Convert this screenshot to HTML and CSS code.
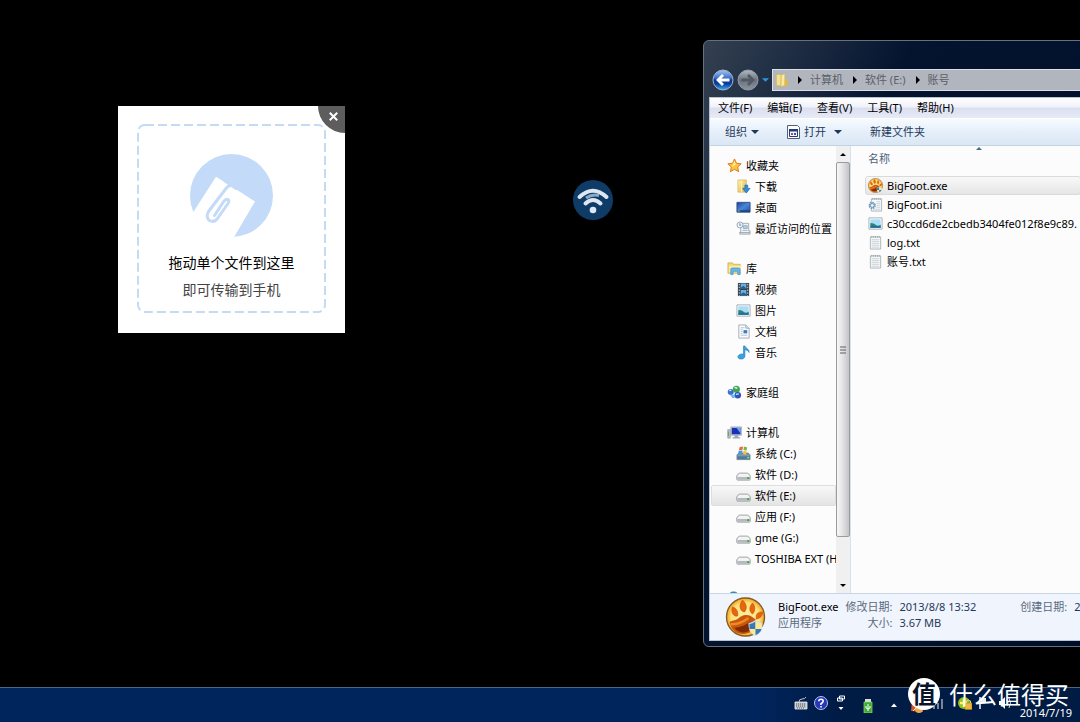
FILE: index.html
```html
<!DOCTYPE html>
<html lang="zh-CN">
<head>
<meta charset="utf-8">
<title>桌面</title>
<link rel="stylesheet" href="styles.css">
</head>
<body class="desktop">
<svg class="defs" aria-hidden="true">
  <defs>
    <linearGradient id="blue" x1="0" y1="0" x2="0" y2="1"><stop offset="0" stop-color="#a9c5ee"/><stop offset=".4" stop-color="#3a72cb"/><stop offset=".5" stop-color="#0b3594"/><stop offset=".7" stop-color="#0d3f9f"/><stop offset="1" stop-color="#35b4f4"/></linearGradient>
    <linearGradient id="grey" x1="0" y1="0" x2="0" y2="1"><stop offset="0" stop-color="#b4bac2"/><stop offset=".5" stop-color="#6b737e"/><stop offset="1" stop-color="#8b939d"/></linearGradient>
    <linearGradient id="gold" x1="0" y1="0" x2="1" y2="1"><stop offset="0" stop-color="#fff3b8"/><stop offset="1" stop-color="#e0b43c"/></linearGradient>
    <linearGradient id="screen" x1="0" y1="0" x2="1" y2="1"><stop offset="0" stop-color="#1b3f96"/><stop offset=".5" stop-color="#4c86d8"/><stop offset="1" stop-color="#1c4ea8"/></linearGradient>
    <radialGradient id="amber"><stop offset="0" stop-color="#fff4a8"/><stop offset=".75" stop-color="#ffe07a"/><stop offset="1" stop-color="#f0a020"/></radialGradient>
    <symbol id="star" viewBox="0 0 16 16"><path d="M8 1l2.100 4.600 5 .6-3.700 3.400 1 5L8 12.100l-4.400 2.500 1-5L.9 6.200l5-.6z" fill="#ffc33c" stroke="#d9761f"/><path d="M8 3l1.300 3.600L5 10z" fill="#fff0a0"/></symbol>
    <symbol id="folder" viewBox="0 0 16 16"><path d="M1.500 1.500h5v12.500l-5-1z" fill="#f5e08c" stroke="#d5b04b" stroke-width=".6"/><path d="M6.500 2.500l4-2v12.500l-4 2z" fill="#fbeaa6" stroke="#cfaa44" stroke-width=".6"/><path d="M10.500 7h3v6.500l-3 1z" fill="#e2b944"/></symbol>
    <symbol id="download" viewBox="0 0 16 16"><path d="M2 1h9v13H2z" fill="url(#gold)" stroke="#d5b04b" stroke-width=".7"/><path d="M6 2v12" stroke="#fff6c8"/><path d="M9.500 6.500h3V10H15l-4 5-4-5h2.500z" fill="#2f8fdb" stroke="#1d66b1" stroke-width=".7"/></symbol>
    <symbol id="monitor" viewBox="0 0 16 16"><path d="M1 2.500h14v10.500H1z" fill="url(#screen)" stroke="#325185"/><path d="M1.500 11h13v1.500h-13z" fill="#1d3e78"/><path d="M2 11.700h2" stroke="#8ed66b"/></symbol>
    <symbol id="recent" viewBox="0 0 16 16"><path d="M5 2.500h8.500v8h1.500v3.500H4V12h1z" fill="#edf2f6" stroke="#8e9ba6" stroke-width=".8"/><path d="M4 12.500h11" stroke="#8e9ba6"/><path d="M8 5h4v3H8zM7 10h5" fill="#b8cce0" stroke="#8aa4bd" stroke-width=".8"/><circle cx="4.200" cy="4.200" r="3.200" fill="#e9f2f8" stroke="#7d95a8" stroke-width=".8"/><path d="M4 2.500v2h1.500" fill="none" stroke="#466887" stroke-width=".7"/></symbol>
    <symbol id="library" viewBox="0 0 16 16"><path d="M1 2h5l1 1.500h7V13H1z" fill="#f3d776" stroke="#cda846" stroke-width=".8"/><path d="M2 5h13v7H2z" fill="#faeaa9"/><path d="M4 14.500V9q0-1.500 1.500-1.500h7Q14 7.500 14 9v5.500h-2.500V11h-5v3.500z" fill="#66b9e4" stroke="#3a8fc4" stroke-width=".7"/></symbol>
    <symbol id="video" viewBox="0 0 16 16"><path d="M2 1h12v14H2z" fill="#36404b"/><path d="M5 1.500h6v6H5zM5 8.500h6v6H5z" fill="#67afe3"/><path d="M5 6l3-2 3 3v.5H5zM5 13l3-2 3 2v1.500H5z" fill="#2c5e91"/><path d="M3.500 2v13M12.500 2v13" stroke="#d5dce4" stroke-dasharray="1.500 1.500"/></symbol>
    <symbol id="picture" viewBox="0 0 16 16"><path d="M1 2h14v12H1z" fill="#fff" stroke="#8c98a4" stroke-width=".8"/><path d="M2.500 3.500h11v9h-11z" fill="#a9dcf6"/><path d="M2.500 7.500q4 0 6 2t5-.5v3.500h-11z" fill="#2a8378"/><path d="M2.500 11h11v1.500h-11z" fill="#2367a4"/></symbol>
    <symbol id="document" viewBox="0 0 16 16"><path d="M3 1h7.500L14 4.500V15H3z" fill="#fbfcfd" stroke="#8c98a4" stroke-width=".8"/><path d="M10.500 1v3.500H14" fill="#dce4ec" stroke="#8c98a4" stroke-width=".8"/><path d="M5 4h4M5 6h2M5 8h2M5 10h2M5 12h7" stroke="#9db0c4" stroke-width=".8"/><path d="M8 6.500h4v3.500H8z" fill="#3e7cc0"/></symbol>
    <symbol id="music" viewBox="0 0 16 16"><path d="M8 1h1.500c.5 2.500 5 3 4.500 7-1-2.500-3-2.500-4.500-3v7c0 2-2 3-4 3s-3.500-1-3.500-2.500S4 9.500 6.500 9.500H8z" fill="#38a1df" stroke="#1d78b8" stroke-width=".6"/></symbol>
    <symbol id="homegroup" viewBox="0 0 16 16"><circle cx="4" cy="7.500" r="3.200" fill="#3b6fd0"/><circle cx="10" cy="4.500" r="3.800" fill="#42a354"/><circle cx="11.500" cy="11" r="3.500" fill="#3154b8"/><path d="M2 9l3 2 3-1 1 3-3 1z" fill="#62b7e8"/><path d="M8 2.500l3 1M2.500 6l2-.5M9.500 10l3-.5" stroke="#d6f1ff" stroke-width="1.500"/></symbol>
    <symbol id="computer" viewBox="0 0 16 16"><path d="M.8 5h2.700v9H.8z" fill="#b9c6cf" stroke="#77848f" stroke-width=".6"/><path d="M4 2h11.500v9H4z" fill="#d5dce3" stroke="#8795a3" stroke-width=".6"/><path d="M5 3h9.500v7H5z" fill="#1c2fb5"/><path d="M10 3h4.500v6z" fill="#6fa5ef"/><path d="M8 11h4v2h2v1.500H6V13h2z" fill="#9aa8b5"/><path d="M1.500 7v5" stroke="#5fa852"/></symbol>
    <symbol id="system" viewBox="0 0 16 16"><path d="M1 9.500l2-2h10l2 2V14.500H1z" fill="#7f99ac" stroke="#526c80" stroke-width=".7"/><path d="M1.500 11h13v3h-13z" fill="#4f7b96"/><path d="M12 12.500h2" stroke="#7ef26a" stroke-width="1.500"/><path d="M4 1l3.500-.5L7 4l-4 .5z" fill="#ee6a35"/><path d="M8.500.5l3.500 1L11 5l-3-.8z" fill="#76b843"/><path d="M3 5l4-.3L6.500 8.500 2 9z" fill="#4a98dc"/><path d="M8 5l3.500.8-1 3.500-3-.8z" fill="#fac13c"/></symbol>
    <symbol id="drive" viewBox="0 0 16 16"><path d="M.8 9.500Q2.500 6.500 4 6.500h8q1.500 0 3.200 3V13q0 1-1 1H1.800q-1 0-1-1z" fill="#f2f3f4" stroke="#85898c" stroke-width=".8"/><path d="M1.500 10h13v2.800q0 .7-.7.7H2.200q-.7 0-.7-.7z" fill="#b4b9bc"/><path d="M2 10h12" stroke="#fff" stroke-width=".8"/><path d="M12 11.800h2.200" stroke="#3c9d37" stroke-width="1.800"/></symbol>
    <symbol id="text" viewBox="0 0 16 16"><path d="M2.500 2h11v13h-11z" fill="#f5f7f8" stroke="#9ba4aa" stroke-width=".8"/><path d="M4 1v2M6 1v2M8 1v2M10 1v2M12 1v2" stroke="#87949d" stroke-width=".7"/><path d="M4 5h8M4 7h8M4 9h8M4 11h8M4 13h8" stroke="#c0cad0" stroke-width=".8"/></symbol>
    <symbol id="ini" viewBox="0 0 16 16"><path d="M3.500 2h11v13h-11z" fill="#f5f7f8" stroke="#9ba4aa" stroke-width=".8"/><path d="M5 1v2M7 1v2M9 1v2M11 1v2M13 1v2" stroke="#87949d" stroke-width=".7"/><path d="M9 5h4M9 7h4M9 9h4M9 11h4M5 13h8" stroke="#c0cad0" stroke-width=".8"/><circle cx="4.500" cy="9" r="3" fill="#eef5fa" stroke="#6c96b9" stroke-width="1.800" stroke-dasharray="1.600 .7"/><circle cx="4.500" cy="9" r="2" fill="none" stroke="#6c96b9"/></symbol>
    <symbol id="paw" viewBox="0 0 40 40"><circle cx="20" cy="20" r="19" fill="url(#amber)" stroke="#805b24" stroke-width="1.300"/><path d="M4 25c3-2 5-1 8-3 4-3 5-4 9-4 5 0 6 3 9 4v10c-6 5-13 6-18 4-4-2-7-6-8-11z" fill="#c9560c"/><path d="M5 27c6 1 11-1 18-6" stroke="#ee8a24" stroke-width="2.500" fill="none"/><path d="M9 31c6-1 12-3 16-7v9c-5 4-12 3-16-2z" fill="#7f2b04"/><g fill="#e7650c" stroke="#c9540a" stroke-width=".7"><path d="M7 10c4 1 6 5 5 9-4 1-7-4-5-9z"/><path d="M17 3c4 4 5 8 2 12-5-1-6-7-2-12z"/><path d="M27 6c3 3 3 8 0 11-4-3-3-8 0-11z"/><path d="M37 15c0 4-2 6-6 7-1-5 1-7 6-7z"/></g><path d="M23 26q4-.5 7-3 4 2.500 7 3c0 7-2 11-7 13-5-2-7-6-7-13z" fill="#d2e0ea"/><path d="M24 27q3-.5 6-2.500V32h-6z" fill="#3678bd"/><path d="M30 24.500q3 2 6 2.500V32h-6z" fill="#ffe98a"/><path d="M24 32h6v6q-5-2-6-6z" fill="#ffe98a"/><path d="M30 32h6q-1 4-6 6z" fill="#3678bd"/></symbol>
    <symbol id="down" viewBox="0 0 8 4"><path d="M0 0h8L4 4z" fill="currentColor"/></symbol>
    <symbol id="up" viewBox="0 0 8 4"><path d="M0 4h8L4 0z" fill="currentColor"/></symbol>
    <symbol id="right" viewBox="0 0 4 8"><path d="M0 0v8l4-4z" fill="currentColor"/></symbol>
  </defs>
</svg>

<section class="drop-card" aria-label="文件传输">
  <button class="close" type="button" aria-label="关闭"><svg viewBox="0 0 8 8"><path d="M.7.7l6.600 6.600M7.300.7L.7 7.300" stroke="#fff" stroke-width="1.800"/></svg></button>
  <svg class="dash" aria-hidden="true"><rect class="dash-line" x="1" y="1" rx="7"/></svg>
  <div class="drop-zone">
    <svg class="drop-logo" viewBox="0 0 83 83"><circle cx="41.500" cy="41.500" r="41.500" fill="#c3daf8"/><path d="M26 22.700L35.700 28.700 41.700 32.500 65 47.500 43.500 84 20 92-6 66 4 57z" fill="#fff"/><path d="M35 27L41 31 46 34.500 42 31.500Q38.500 31 36 34.500L18.500 57.500Q15.500 63.500 19.500 66.500 24 69 27.500 64.500L38 49.500Q40 46 37.500 45.500 35 45 33 48.500L24.500 61.500" fill="none" stroke="#c3daf8" stroke-width="3" stroke-linecap="round" stroke-linejoin="round"/></svg>
    <p class="drop-title">拖动单个文件到这里</p>
    <p class="drop-sub">即可传输到手机</p>
  </div>
</section>

<button class="wifi" type="button" aria-label="无线网络"><svg viewBox="0 0 40 40"><circle cx="20" cy="20" r="20" fill="#0e3c66"/><path d="M6.500 17q13.500-12.500 27 0M12.500 23.500q7.500-7 15 0" fill="none" stroke="#dce7f3" stroke-width="4" stroke-linecap="round"/><path d="M13 18q6-4 13-2.500" fill="none" stroke="#8da9c2" stroke-width="3"/><circle cx="20" cy="30" r="3.300" fill="#dce7f3"/></svg></button>

<main class="window">
  <header class="title-area">
    <button class="round" type="button" aria-label="后退"><svg viewBox="0 0 22 22"><circle cx="11" cy="11" r="10" fill="url(#blue)" stroke="#a2b2cc"/><path d="M17.500 11H6M11 6l-5 5 5 5" fill="none" stroke="#fff" stroke-width="2.800"/></svg></button>
    <button class="round" type="button" aria-label="前进"><svg viewBox="0 0 22 22"><circle cx="11" cy="11" r="10" fill="url(#grey)" stroke="#929ba7"/><path d="M4.500 11H16M11 6l5 5-5 5" fill="none" stroke="#505964" stroke-width="2.800"/></svg></button>
    <button class="history" type="button" aria-label="历史"><svg class="tri"><use href="#down"/></svg></button>
    <nav class="address" aria-label="地址">
      <svg class="icon"><use href="#folder"/></svg>
      <svg class="sep"><use href="#right"/></svg><button type="button">计算机</button>
      <svg class="sep"><use href="#right"/></svg><button type="button">软件 (E:)</button>
      <svg class="sep"><use href="#right"/></svg><button type="button">账号</button>
    </nav>
  </header>
  <div class="client">
    <nav class="menu" aria-label="菜单">
      <button type="button">文件(F)</button><button type="button">编辑(E)</button><button type="button">查看(V)</button><button type="button">工具(T)</button><button type="button">帮助(H)</button>
    </nav>
    <div class="toolbar">
      <button type="button">组织 <svg class="tri"><use href="#down"/></svg></button>
      <button type="button"><svg class="open-icon" viewBox="0 0 13 14"><path d="M.5.500h10l2 2v11H.5z" fill="#fff" stroke="#526174"/><path d="M2.500 4.500h8v7h-8z" fill="#f4f6ff" stroke="#233c79"/><path d="M2 4h9v2.500H2z" fill="#233c79"/><path d="M4 8h2v2H4z" fill="#b04b5b"/><path d="M7 8h2v2H7z" fill="#2c56b8"/></svg>打开 <svg class="tri open-arrow"><use href="#down"/></svg></button>
      <button type="button">新建文件夹</button>
    </div>
    <div class="body">
      <nav class="tree" aria-label="导航窗格">
        <ul class="group">
          <li><a href="#" class="root"><svg class="icon"><use href="#star"/></svg>收藏夹</a></li>
          <li><a href="#"><svg class="icon"><use href="#download"/></svg>下载</a></li>
          <li><a href="#"><svg class="icon"><use href="#monitor"/></svg>桌面</a></li>
          <li><a href="#"><svg class="icon"><use href="#recent"/></svg>最近访问的位置</a></li>
        </ul>
        <ul class="group">
          <li><a href="#" class="root"><svg class="icon"><use href="#library"/></svg>库</a></li>
          <li><a href="#"><svg class="icon"><use href="#video"/></svg>视频</a></li>
          <li><a href="#"><svg class="icon"><use href="#picture"/></svg>图片</a></li>
          <li><a href="#"><svg class="icon"><use href="#document"/></svg>文档</a></li>
          <li><a href="#"><svg class="icon"><use href="#music"/></svg>音乐</a></li>
        </ul>
        <ul class="group">
          <li><a href="#" class="root"><svg class="icon"><use href="#homegroup"/></svg>家庭组</a></li>
        </ul>
        <ul class="group">
          <li><a href="#" class="root"><svg class="icon"><use href="#computer"/></svg>计算机</a></li>
          <li><a href="#"><svg class="icon"><use href="#system"/></svg>系统 (C:)</a></li>
          <li><a href="#"><svg class="icon"><use href="#drive"/></svg>软件 (D:)</a></li>
          <li><a href="#" class="current" aria-current="true"><svg class="icon"><use href="#drive"/></svg>软件 (E:)</a></li>
          <li><a href="#"><svg class="icon"><use href="#drive"/></svg>应用 (F:)</a></li>
          <li><a href="#"><svg class="icon"><use href="#drive"/></svg>gme (G:)</a></li>
          <li><a href="#"><svg class="icon"><use href="#drive"/></svg>TOSHIBA EXT (H:)</a></li>
        </ul>
        <ul class="group">
          <li><a href="#" class="root" aria-label="网络"><svg class="icon" viewBox="0 0 16 16"><circle cx="7" cy="7" r="6" fill="#329ac4" stroke="#2276a0"/><path d="M4 4l4-2 2 3z" fill="#7fce6c"/></svg></a></li>
        </ul>
      </nav>
      <div class="scroll">
        <button type="button" aria-label="向上滚动"><svg class="tri small"><use href="#up"/></svg></button>
        <div class="thumb"><svg viewBox="0 0 6 8"><path d="M0 1h6M0 4h6M0 7h6" stroke="#585e66"/></svg></div>
        <button type="button" aria-label="向下滚动"><svg class="tri small"><use href="#down"/></svg></button>
      </div>
      <div class="files">
        <svg class="sort"><use href="#up"/></svg>
        <table>
          <thead><tr><th scope="col">名称</th></tr></thead>
          <tbody>
            <tr class="selected"><td><div class="file"><svg class="icon"><use href="#paw"/></svg>BigFoot.exe</div></td></tr>
            <tr><td><div class="file"><svg class="icon"><use href="#ini"/></svg>BigFoot.ini</div></td></tr>
            <tr><td><div class="file"><svg class="icon"><use href="#picture"/></svg>c30ccd6de2cbedb3404fe012f8e9c89.</div></td></tr>
            <tr><td><div class="file"><svg class="icon"><use href="#text"/></svg>log.txt</div></td></tr>
            <tr><td><div class="file"><svg class="icon"><use href="#text"/></svg>账号.txt</div></td></tr>
          </tbody>
        </table>
      </div>
    </div>
    <footer class="details">
      <svg class="big-icon"><use href="#paw"/></svg>
      <dl class="facts">
        <dt class="name">BigFoot.exe</dt><dd class="label">修改日期:</dd><dd>2013/8/8 13:32</dd><dd class="label created">创建日期:</dd><dd>2013</dd>
        <dt class="label">应用程序</dt><dd class="label">大小:</dd><dd>3.67 MB</dd>
      </dl>
    </footer>
  </div>
</main>

<footer class="taskbar">
  <div class="tray">
    <svg class="t14" viewBox="0 0 14 14"><path d="M1 6h12v7H1z" fill="#c1c4c6" stroke="#edf0f1" stroke-width=".8"/><path d="M2 8h10M2 10h10M3 12h8" stroke="#535a60" stroke-dasharray="1 1"/><path d="M5 6q0-3 3-3t4-2" fill="none" stroke="#c1c4c6"/></svg>
    <svg class="t14 help" viewBox="0 0 14 14"><circle cx="7" cy="7" r="6.500" fill="#2638b8" stroke="#b6c3f0"/><path d="M4.800 5.300q0-2 2.200-2t2.200 1.800Q9.200 6.500 7 7.700V9" fill="none" stroke="#fff" stroke-width="1.600"/><path d="M6.200 10h1.600v1.500H6.200z" fill="#fff"/></svg>
    <svg class="t8 restore" viewBox="0 0 8 16"><path d="M2.500 1h5v3h-5zM.5 3h5v3h-5z" fill="#00204f" stroke="#fff"/><path d="M1.500 12h5L4 15z" fill="#fff"/></svg>
    <svg class="t14 usb" viewBox="0 0 14 14"><path d="M4 0h6v4H4z" fill="#d7dde0"/><path d="M3 3h8v11H3z" fill="#3daa32" stroke="#96df77" stroke-width=".7"/><path d="M7 5v7M5 7v2l2 1 2-1V7" fill="none" stroke="#fff"/></svg>
    <svg class="t8 more" viewBox="0 0 8 8"><path d="M1 6h6L4 2.500z" fill="#fff"/></svg>
    <svg class="t14 fire" viewBox="0 0 14 14"><path d="M1 12L2 2l5 3 4 2 2 6z" fill="#d9512e"/><circle cx="9" cy="10" r="4" fill="#efa849"/><path d="M3 12l5-5 3 4" stroke="#fff0b4" fill="none"/></svg>
    <svg class="t14 signal" viewBox="0 0 14 14"><path d="M4 13v-3M8 13V7M12 13V3" stroke="#7a8599" stroke-width="2"/></svg>
    <svg class="t14 guard" viewBox="0 0 14 14"><circle cx="6" cy="7" r="6" fill="#8fc320"/><path d="M2 7h7M6 3v8" stroke="#fff36b" stroke-width="2.500"/><path d="M7 7h7v6.500H7z" fill="#ecb93e" stroke="#a87e16" stroke-width=".6"/><path d="M8.500 7V5q2-2 4 0v2" fill="none" stroke="#e8d68c"/></svg>
    <svg class="t14 flag" viewBox="0 0 14 14"><path d="M2 1v12" stroke="#fff" stroke-width="1.500"/><path d="M3 2h5v5H3z" fill="#e9edf4"/></svg>
    <svg class="t14" viewBox="0 0 14 14"><path d="M1 5h2l4-4v12L3 9H1z" fill="#fff"/><path d="M9 4q2 3 0 6M11 2q3 5 0 10" fill="none" stroke="#cbd4e1"/></svg>
  </div>
  <time class="clock" datetime="2014-07-19">2014/7/19</time>
</footer>
<div class="watermark"><span class="seal">值</span><span>什么值得买</span></div>
</body>
</html>
```

FILE: styles.css
```css
* { box-sizing: border-box; }
.desktop {
  position: relative;
  height: 100vh;
  margin: 0;
  overflow: hidden;
  background: #000;
  color: #000;
  font: 11px/16px "Noto Sans", "Noto Sans CJK SC", sans-serif;
}
.defs { position: absolute; width: 0; height: 0; }
svg { display: block; flex: none; }
button { padding: 0; border: 0; background: none; color: inherit; font: inherit; white-space: nowrap; }
ul, dl, dd, p { margin: 0; padding: 0; list-style: none; }
.icon { width: 15px; height: 15px; }
.tri { width: 8px; height: 4px; }
.tri.small { width: 6px; height: 3px; }

/* Drop card */
.drop-card { position: absolute; left: 118px; top: 106px; width: 227px; padding: 18px 19px 19px; background: #fff; }
.drop-zone { display: flex; flex-direction: column; align-items: center; padding: 30px 0 11px; }
.dash { position: absolute; left: 19px; top: 18px; width: 189px; height: 189px; }
.dash-line { width: 187px; height: 187px; fill: none; stroke: #c5daf3; stroke-width: 2px; stroke-dasharray: 9px 4px; }
.drop-logo { width: 83px; height: 83px; margin-bottom: 12px; }
.drop-title, .drop-sub { font-size: 14px; line-height: 27px; }
.drop-sub { color: #444; }
.close { position: absolute; top: 0; right: 0; display: grid; place-items: center; width: 27px; height: 27px; padding: 0 0 6px 4px; border-bottom-left-radius: 27px; background: #5d5d5d; }
.close svg { width: 9px; height: 9px; }
.wifi { position: absolute; left: 573px; top: 180px; }
.wifi svg { width: 40px; height: 40px; }

/* Explorer window */
.window {
  position: absolute; left: 703px; right: -8px; top: 40px; bottom: 75px;
  display: flex; flex-direction: column;
  padding: 0 5px 5px;
  border: 1px solid #66717f; border-radius: 6px;
  background: linear-gradient(115deg, #34404f 0, #253348 60px, #04142f 190px, #000d29 100%);
}
.title-area { display: flex; align-items: center; gap: 3px; padding: 28px 0 6px 3px; }
.round svg { width: 22px; height: 22px; }
.history { color: #299ade; }
.history .tri { width: 7px; }
.address { display: flex; flex: 1; align-items: center; height: 22px; padding-left: 2px; border: 1px solid #dce0e6; background: #b1b5be; color: #5b6068; }
.address .sep { width: 4px; height: 8px; margin: 0 8px 0 10px; color: #000; }
.address .icon + .sep { margin-left: 8px; }
.client { display: flex; flex: 1; flex-direction: column; min-height: 0; border: 1px solid #b9c4d2; background: #fcfcfd; }
.menu { display: flex; gap: 15px; padding: 2px 8px; background: linear-gradient(#fff, #f0f1fa 45%, #dadff0 50%, #e7eaf6); }
.toolbar { display: flex; align-items: center; height: 28px; padding-left: 15px; gap: 28px; border-top: 1px solid #fff; border-bottom: 1px solid #c3d2e4; background: linear-gradient(#f7fbff, #e5effa 50%, #dbe7f5); color: #1e395b; }
.toolbar button { display: flex; align-items: center; gap: 4px; }
.open-icon { width: 13px; height: 14px; }
.open-arrow { margin-left: 4px; }
.body { display: flex; flex: 1; min-height: 0; }
.tree { width: 126px; padding: 9px 0 0 1px; overflow: hidden; }
.group { margin-bottom: 19px; }
.tree a { display: flex; align-items: center; gap: 4px; height: 21px; padding-left: 24px; border: 1px solid transparent; color: #000; text-decoration: none; white-space: nowrap; }
.tree .root { padding-left: 15px; }
.tree .current { border-color: #dedede; border-radius: 2px; background: linear-gradient(#f8f8f8, #e4e4e4); }
.scroll { display: flex; flex-direction: column; width: 14px; background: #f0f0f1; }
.scroll button { display: grid; flex: 0 0 16px; place-items: center; }
.thumb { display: grid; flex: 0 1 84%; place-items: center; border: 1px solid #9b9b9d; border-radius: 2px; background: linear-gradient(90deg, #f7f7f7, #e4e4e6 45%, #c4c4c8); }
.thumb svg { width: 6px; height: 8px; }
.thumb + button { margin-top: auto; }
.files { position: relative; flex: 1; min-width: 0; padding: 2px 0 0 14px; border-left: 1px solid #d6e3ee; overflow: hidden; }
.files table { width: 100%; border-collapse: collapse; }
.files th { height: 28px; padding: 0 0 7px 3px; color: #4c607a; font-weight: 400; text-align: left; }
.files td { padding: 0; white-space: nowrap; }
.file { display: flex; align-items: center; gap: 4px; height: 19px; padding-left: 2px; border: 1px solid transparent; }
.selected .file { border-color: #dadada; border-radius: 3px; background: linear-gradient(#f8f8f8, #e6e6e6); }
.sort { position: absolute; left: 125px; top: 1px; width: 6px; height: 3px; color: #3c6f8d; }
.details { display: flex; gap: 12px; padding: 3px 0 3px 15px; border-top: 1px solid #c9d6e7; background: #f0f4fc; color: #1e395b; }
.big-icon { width: 41px; height: 40px; }
.facts { display: grid; grid-template-columns: repeat(5, max-content); column-gap: 7px; align-content: start; padding-top: 2px; white-space: nowrap; }
.facts .label { color: #5a6a80; }
.facts dd.label { text-align: right; }
.facts .name { color: #000; }
.facts .created { padding-left: 37px; }

/* Taskbar */
.taskbar { position: absolute; inset: auto 0 0; display: flex; align-items: flex-end; justify-content: flex-end; height: 35px; padding-right: 8px; border-top: 1px solid #47698d; background: linear-gradient(90deg, #00245c 70%, #001b44 78%, #001b44); color: #fff; }
.tray { display: flex; align-items: center; height: 34px; padding-bottom: 4px; }
.t14 { width: 14px; height: 14px; }
.t8 { width: 8px; height: 16px; }
.help { margin: 0 9px 0 6px; }
.usb { margin: 6px 15px 0 16px; }
.more { margin: 4px 12px 0 0; }
.fire { margin-top: 6px; }
.signal { margin: 0 14px 0 6px; }
.flag { margin: 0 6px; }
.clock { margin-left: 8px; line-height: 18px; }
.watermark { position: absolute; right: 11px; bottom: 12px; display: flex; align-items: center; gap: 9px; color: #fff; font: 24px/32px "Noto Sans CJK SC", sans-serif; pointer-events: none; }
.seal { width: 32px; height: 32px; border-radius: 50%; background: #fff; color: #07142c; font-weight: 700; line-height: 30px; text-align: center; }
```
